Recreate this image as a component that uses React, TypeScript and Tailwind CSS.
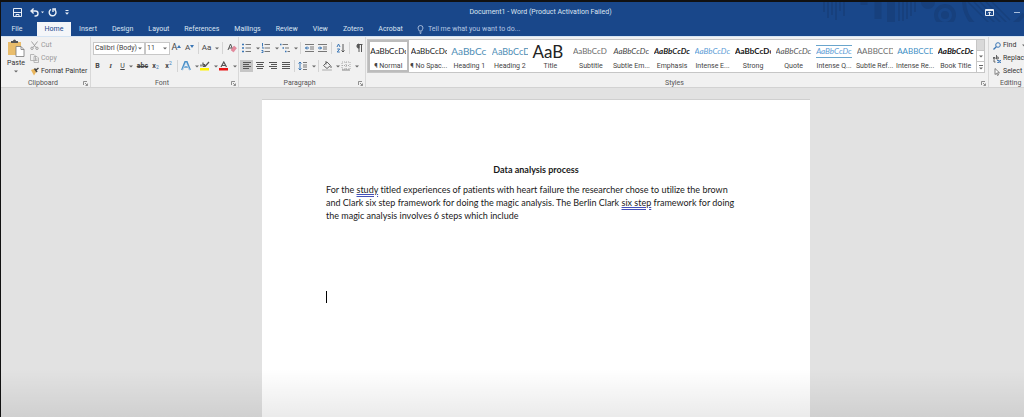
import type { ReactNode } from "react";

type Style = { label: string; sample?: string; look: string };

const tabs = ["Insert", "Design", "Layout", "References", "Mailings", "Review", "View", "Zotero", "Acrobat"];

const styles: Style[] = [
  { label: "¶ Normal", look: "text-[#222]" },
  { label: "¶ No Spac...", look: "text-[#222]" },
  { label: "Heading 1", sample: "AaBbCc", look: "text-[10px] text-[#4d8db5]" },
  { label: "Heading 2", sample: "AaBbCcD", look: "text-[9px] text-[#4d8db5]" },
  { label: "Title", sample: "AaB", look: "text-[17px] text-[#222]" },
  { label: "Subtitle", sample: "AaBbCcD", look: "text-[#6b6b6b]" },
  { label: "Subtle Em...", look: "italic text-[#444]" },
  { label: "Emphasis", look: "italic font-bold text-[#222]" },
  { label: "Intense E...", look: "italic text-[#5b9bd5]" },
  { label: "Strong", look: "font-bold text-[#111]" },
  { label: "Quote", look: "italic text-[#555]" },
  { label: "Intense Q...", look: "italic text-[#5b9bd5] border-y border-[#6aa5cc]" },
  { label: "Subtle Ref...", sample: "AABBCCDD", look: "text-[#6b6b6b]" },
  { label: "Intense Re...", sample: "AABBCCDD", look: "text-[#3f8fc4]" },
  { label: "Book Title", look: "italic font-bold text-[#111]" },
];

const Caret = () => (
  <svg viewBox="0 0 4 3" className="h-[3px] w-1 shrink-0">
    <path d="M0 .5h4L2 2.5z" fill="#666" />
  </svg>
);

const Sep = () => <span className="mx-[2px] h-3 w-px shrink-0 bg-[#d4d4d4]" />;

const Tool = ({ label, children, caret, active }: { label: string; children: ReactNode; caret?: boolean; active?: boolean }) => (
  <button
    type="button"
    aria-label={label}
    className={`flex h-3 shrink-0 items-center justify-center text-[#444] ${caret ? "w-[19px] gap-1" : "w-[13px]"} ${active ? "bg-[#c6c6c6]" : ""}`}
  >
    {children}
    {caret && <Caret />}
  </button>
);

const Icon = ({ children }: { children: ReactNode }) => (
  <svg viewBox="0 0 10 10" className="size-[10px] shrink-0" fill="none" stroke="#555" strokeWidth="1">
    {children}
  </svg>
);

const Launcher = () => (
  <svg viewBox="0 0 5 5" className="size-[5px]" fill="none" stroke="#777" strokeWidth=".8">
    <path d="M.5 4V.5H4M2 2l2.2 2.2M4.5 2.5v2h-2" />
  </svg>
);

const Group = ({ name, className, children }: { name: string; className: string; children: ReactNode }) => (
  <section aria-label={name} className={`flex flex-col border-r border-[#d8d8d8] ${className}`}>
    <div className="h-[42px]">{children}</div>
    <div className="flex h-2 items-center px-[2px] text-[7px] leading-[8px] text-[#555]">
      <span className="flex-1 text-center">{name}</span>
      <button type="button" aria-label={`${name} settings`}>
        <Launcher />
      </button>
    </div>
  </section>
);

const TitleArt = () => (
  <svg viewBox="0 0 210 32" className="absolute top-0 right-0 h-8 w-[210px]" fill="none" stroke="#17407d">
    <path strokeWidth="2" d="M10 0v10M14 0v16M18 0v13M22 0v18M26 0v9M30 0v14" />
    <path strokeWidth="7" d="M50 0v3M64 0v17" />
    <path strokeWidth="8" d="M77 0v21" />
    <path strokeWidth="2" d="M85 0v19M89 0v19M93 0v17M97 0v14M101 0v10" />
    <circle cx="114" cy="0" r="7" fill="#17407d" stroke="none" />
    <circle cx="131" cy="13" r="9" strokeWidth="4" />
    <circle cx="131" cy="13" r="4" fill="#17407d" stroke="none" />
    <path strokeWidth="4" d="M150 0c1 17 12 29 29 29 12 0 22-6 31-17" />
    <path strokeWidth="1.5" d="M154 0l25 25M160 0l24 24M166 0l23 23M172 0l21 21M178 0l18 18" />
  </svg>
);

const TitleBar = () => (
  <div className="relative flex h-5 items-center bg-[#19478a] text-white">
    <TitleArt />
    <div className="relative flex items-center gap-2 pl-3">
      <button type="button" aria-label="Save">
        <svg viewBox="0 0 9 9" className="size-[9px]" fill="none" stroke="#e8eef6">
          <path d="M.5.5h8v8h-8zM.5 4.5h8M3 8.5V6.5h3v2" />
        </svg>
      </button>
      <button type="button" aria-label="Undo" className="flex items-center gap-[2px]">
        <svg viewBox="0 0 9 9" className="size-[9px]" fill="none" stroke="#e8eef6" strokeWidth="1.4">
          <path d="M3.6.6L1 3l2.6 2.4M1.2 3H5.500a2.500 2.500 0 0 1 0 5H4.500" />
        </svg>
        <svg viewBox="0 0 4 3" className="h-[3px] w-[3px]">
          <path d="M0 0h4L2 2.500z" fill="#e8eef6" />
        </svg>
      </button>
      <button type="button" aria-label="Repeat" className="-ml-1">
        <svg viewBox="0 0 9 9" className="size-[9px]" fill="none" stroke="#e8eef6" strokeWidth="1.4">
          <path d="M3 1.400A3.400 3.400 0 1 0 6.500 1.600M5 4V1h3" />
        </svg>
      </button>
      <button type="button" aria-label="Customize toolbar">
        <svg viewBox="0 0 4 5" className="h-[5px] w-1">
          <path d="M.5 0h3v1h-3zM0 2.500h4L2 4.800z" fill="#e8eef6" />
        </svg>
      </button>
    </div>
    <h1 className="absolute inset-x-0 pl-14 text-center text-[7px] text-[#dbe5f2]">Document1 - Word (Product Activation Failed)</h1>
    <div className="relative ml-auto flex items-center gap-5 pr-1">
      <button type="button" aria-label="Ribbon display options">
        <svg viewBox="0 0 9 7" className="h-[7px] w-[9px]" fill="none" stroke="#e8eef6">
          <path d="M.5.5h8v6h-8zM.5 1.500h8M4.500 6V3M3 4.300l1.500-1.500L6 4.300" />
        </svg>
      </button>
      <button type="button" aria-label="Minimize" className="h-px w-[6px] bg-[#aabfdc]" />
    </div>
  </div>
);

const TabRow = () => (
  <nav className="relative flex h-[14px] items-stretch bg-[#19478a] text-[7px] text-[#dbe5f2]">
    <a href="#file" className="flex w-8 items-center justify-center">File</a>
    <a href="#home" className="ml-1 flex w-[34px] items-center justify-center bg-[#f4f6f9] text-[#19478a]">Home</a>
    <div className="flex gap-[15px] pl-2">
      {tabs.map((tab) => (
        <a key={tab} href={`#${tab.toLowerCase()}`} className="flex items-center">
          {tab}
        </a>
      ))}
    </div>
    <label className="ml-[14px] flex flex-1 items-center gap-1">
      <svg viewBox="0 0 7 9" className="h-[9px] w-[7px]" fill="none" stroke="#c3d2e8" strokeWidth=".8">
        <path d="M2.300 6C2.300 5 1 4.500 1 3a2.500 2.500 0 0 1 5 0c0 1.500-1.300 2-1.300 3zM2.500 7.200h2M2.800 8.400h1.400" />
      </svg>
      <input
        type="text"
        aria-label="Tell me"
        placeholder="Tell me what you want to do..."
        className="h-3 w-40 bg-transparent outline-none placeholder:text-[#b3c6e2]"
      />
    </label>
  </nav>
);

const Clipboard = () => (
  <Group name="Clipboard" className="w-[90px]">
    <div className="flex pt-[2px] pl-[5px]">
      <button type="button" className="flex w-[20px] flex-col items-center text-[7px] leading-[8px] text-[#333]">
        <svg viewBox="0 0 18 18" className="size-[18px]">
          <path d="M1 3h13v13H1z" fill="#e9bd6c" />
          <path d="M4 4V2h2a1.500 1.500 0 0 1 3 0h2v2z" fill="#555" />
          <path d="M9 7.500h5l3 3v7H9z" fill="#fff" stroke="#777" strokeWidth=".8" />
          <path d="M14 7.500v3h3" fill="none" stroke="#777" strokeWidth=".8" />
        </svg>
        <span className="mt-[2px]">Paste</span>
        <span className="mt-[3px]"><Caret /></span>
      </button>
      <div className="flex flex-col pl-1 text-[7px] leading-[13px] text-[#999]">
        <button type="button" className="flex items-center gap-[2px]">
          <svg viewBox="0 0 9 9" className="size-[9px]" fill="none" stroke="#999" strokeWidth=".9">
            <path d="M1.500.5l4.500 6M7.500.5L3 6.500" />
            <circle cx="2" cy="7.300" r="1.200" />
            <circle cx="7" cy="7.300" r="1.200" />
          </svg>
          Cut
        </button>
        <button type="button" className="flex items-center gap-[2px]">
          <svg viewBox="0 0 9 9" className="size-[9px]" fill="#f1f1f1" stroke="#aaa" strokeWidth=".8">
            <path d="M.5.5H4L5.500 2v4.500h-5zM4 2.500h3L8.500 4v4.500H4zM5 5h2.500M5 6.500h2.500" />
          </svg>
          Copy
        </button>
        <button type="button" className="flex items-center gap-[2px] whitespace-nowrap text-[#333]">
          <svg viewBox="0 0 9 9" className="size-[9px]">
            <path d="M1 3l4-1.500 1.500 3L4 8.500z" fill="#e9b55c" />
            <path d="M4.500 1.500L7 5M6 3l2.500-2" stroke="#444" strokeWidth="1.500" />
          </svg>
          Format Painter
        </button>
      </div>
    </div>
  </Group>
);

const Combo = ({ label, value, className }: { label: string; value: string; className: string }) => (
  <div className={`relative flex h-[13px] shrink-0 items-center border border-[#c8c8c8] bg-white ${className}`}>
    <select aria-label={label} className="h-[11px] w-full appearance-none bg-transparent pl-px text-[7px] leading-[11px] text-[#444] outline-none">
      <option>{value}</option>
    </select>
    <span className="pointer-events-none absolute right-[2px] flex"><Caret /></span>
  </div>
);

const FontGroup = () => (
  <Group name="Font" className="w-[148px]">
    <div className="flex h-[22px] items-center pl-[2px] text-[8px]">
      <Combo label="Font" value="Calibri (Body)" className="w-[52px]" />
      <Combo label="Font size" value="11" className="w-[25px]" />
      <Tool label="Grow font">
        <span className="text-[9px]">A</span>
        <svg viewBox="0 0 4 3" className="mb-1 h-[3px] w-1"><path d="M0 3h4L2 0z" fill="#3a76b5" /></svg>
      </Tool>
      <Tool label="Shrink font">
        A
        <svg viewBox="0 0 4 3" className="mb-1 h-[3px] w-1"><path d="M0 0h4L2 3z" fill="#3a76b5" /></svg>
      </Tool>
      <Sep />
      <Tool label="Change case" caret>Aa</Tool>
      <Sep />
      <Tool label="Clear formatting">
        <Icon>
          <path d="M1 7l2.500-6L6 7M2 5h3" />
          <path d="M4 7l3-4 2.500 2-3 4z" fill="#e58a9c" stroke="#d9738a" strokeWidth=".5" />
        </Icon>
      </Tool>
    </div>
    <div className="flex h-[14px] items-center text-[7px]">
      <Tool label="Bold"><b>B</b></Tool>
      <Tool label="Italic"><i className="font-['Liberation_Serif',serif] font-bold">I</i></Tool>
      <Tool label="Underline" caret><span className="underline">U</span></Tool>
      <Tool label="Strikethrough"><s className="font-bold">abc</s></Tool>
      <Tool label="Subscript"><b>x</b><span className="mt-1 text-[5px] text-[#3a76b5]">2</span></Tool>
      <Tool label="Superscript"><b>x</b><span className="mb-1 text-[5px] text-[#3a76b5]">2</span></Tool>
      <Sep />
      <Tool label="Text effects" caret>
        <Icon>
          <path d="M1 9L4.200 1h1.600L9 9M2.800 6h4.400" stroke="#4a90c8" strokeWidth="2" />
          <path d="M1.500 9L5 1.500 8.500 9M3 6h4" stroke="#eef5fb" strokeWidth=".6" />
        </Icon>
      </Tool>
      <Tool label="Highlight" caret>
        <Icon>
          <path d="M1 5.500V3.500M3 5.500v-4M3 3.500h1.500v2H3M5 5.500L9 1" strokeWidth="1.200" />
          <path d="M0 7h9v2.500H0z" fill="#fff200" stroke="none" />
        </Icon>
      </Tool>
      <Tool label="Font color" caret>
        <Icon>
          <path d="M2 6l2.800-5L7.500 6M3 4.500h3.500" strokeWidth="1.200" />
          <path d="M0 7h9v2.500H0z" fill="#e81414" stroke="none" />
        </Icon>
      </Tool>
    </div>
  </Group>
);

const ParagraphGroup = () => (
  <Group name="Paragraph" className="w-[127px]">
    <div className="flex h-[22px] items-center pl-[2px]">
      <Tool label="Bullets" caret>
        <Icon>
          <path d="M0 1.500h2M0 5h2M0 8.500h2" stroke="#3a76b5" strokeWidth="1.600" />
          <path d="M3.500 1.500H9M3.500 5H9M3.500 8.500H9" stroke="#777" />
        </Icon>
      </Tool>
      <Tool label="Numbering" caret>
        <Icon>
          <path d="M1.500 0v3M1 4h1v2M.5 7.500h1.500v2H.5" stroke="#3a76b5" />
          <path d="M3.500 1.500H9M3.500 5H9M3.500 8.500H9" stroke="#777" />
        </Icon>
      </Tool>
      <Tool label="Multilevel list" caret>
        <Icon>
          <path d="M0 1.500h1.500M2.500 5H4M5 8.500h1.500" stroke="#3a76b5" strokeWidth="1.600" />
          <path d="M2.500 1.500H8M5 5h4M7.500 8.500H10" stroke="#777" />
        </Icon>
      </Tool>
      <Sep />
      <Tool label="Decrease indent">
        <Icon>
          <path d="M0 1.500h9M5 4h4M5 6h4M0 8.500h9" stroke="#777" />
          <path d="M4 5H.5M2 3.500L.5 5 2 6.500" stroke="#2b6cb0" />
        </Icon>
      </Tool>
      <Tool label="Increase indent">
        <Icon>
          <path d="M0 1.500h9M5 4h4M5 6h4M0 8.500h9" stroke="#777" />
          <path d="M0 5h3.500M2 3.500L3.500 5 2 6.500" stroke="#2b6cb0" />
        </Icon>
      </Tool>
      <Sep />
      <Tool label="Sort">
        <Icon>
          <path d="M1 4l1.500-3L4 4M1.200 6h2.500L1.200 9h2.600" stroke="#3a76b5" />
          <path d="M7 1v8M5.500 7.500L7 9l1.500-1.500" />
        </Icon>
      </Tool>
      <Sep />
      <Tool label="Show marks">
        <Icon>
          <path d="M5 9V1.500M7.500 9V1.500M3.500 1.500H8.500" />
          <path d="M5 1a2 2 0 0 0 0 4.200z" fill="#555" />
        </Icon>
      </Tool>
    </div>
    <div className="flex h-[14px] items-center pl-px">
      <Tool label="Align left" active>
        <Icon><path d="M1 1.500h8M1 3.500h6M1 5.500h8M1 7.500h6" /></Icon>
      </Tool>
      <Tool label="Center">
        <Icon><path d="M1 1.500h8M2 3.500h6M1 5.500h8M2 7.500h6" /></Icon>
      </Tool>
      <Tool label="Align right">
        <Icon><path d="M1 1.500h8M3 3.500h6M1 5.500h8M3 7.500h6" /></Icon>
      </Tool>
      <Tool label="Justify">
        <Icon><path d="M1 1.500h8M1 3.500h8M1 5.500h8M1 7.500h8" /></Icon>
      </Tool>
      <Sep />
      <Tool label="Line spacing" caret>
        <Icon>
          <path d="M2 1v8M.5 2.500L2 1l1.500 1.500M.5 7.500L2 9l1.500-1.500" stroke="#3a76b5" />
          <path d="M5 1.500h4M5 4h4M5 6h4M5 8.500h4" stroke="#777" />
        </Icon>
      </Tool>
      <Sep />
      <Tool label="Shading" caret>
        <Icon>
          <path d="M1.500 4.500L5 1l3.500 3.500-3.500 3zM4 0v3.500M9 5v2" stroke="#666" />
          <path d="M.5 8.500h9v1h-9z" stroke="#aaa" strokeWidth=".5" />
        </Icon>
      </Tool>
      <Tool label="Borders" caret>
        <Icon>
          <path d="M1 1h8v7H1zM5 1v7M1 4.500h8" stroke="#aaa" strokeDasharray="1 1" />
          <path d="M1 9h8" stroke="#888" />
        </Icon>
      </Tool>
    </div>
  </Group>
);

const StylesGroup = () => (
  <Group name="Styles" className="min-w-0 flex-1">
    <div className="mt-[2px] ml-px mr-[3px] flex h-[34px] border border-[#c6c6c6] bg-white">
      <div className="grid min-w-0 flex-1 grid-cols-15">
        {styles.map(({ label, sample = "AaBbCcDc", look }, i) => (
          <button
            key={label}
            type="button"
            className={`flex min-w-0 flex-col items-center ${i === 0 ? "outline-2 -outline-offset-2 outline-[#bcbcbc]" : ""}`}
          >
            <span className="flex h-[21px] w-9 items-center overflow-hidden pt-[2px]">
              <span className={`font-[Lato,sans-serif] whitespace-nowrap text-[8px] leading-[11px] ${look}`}>{sample}</span>
            </span>
            <span className="text-[7px] leading-[10px] whitespace-nowrap text-[#444]">{label}</span>
          </button>
        ))}
      </div>
      <div className="flex w-2 flex-col divide-y divide-[#c6c6c6] border-l border-[#c6c6c6]">
        <button type="button" aria-label="Previous styles" className="flex flex-1 items-center justify-center bg-[#d9d9d9]" />
        <button type="button" aria-label="Next styles" className="flex flex-1 items-center justify-center"><Caret /></button>
        <button type="button" aria-label="More styles" className="flex flex-1 flex-col items-center justify-center gap-px">
          <span className="h-px w-1 bg-[#666]" />
          <Caret />
        </button>
      </div>
    </div>
  </Group>
);

const Editing = () => (
  <section aria-label="Editing" className="flex w-[35px] flex-col overflow-hidden text-[7px] text-[#333]">
    <div className="flex h-[42px] flex-col pt-[2px] pl-1 leading-[13px]">
      <button type="button" className="flex items-center gap-[2px]">
        <svg viewBox="0 0 8 8" className="size-2 shrink-0" fill="none" stroke="#3a76b5">
          <circle cx="5" cy="3" r="2.300" />
          <path d="M3.300 4.700L.5 7.500" strokeWidth="1.300" />
        </svg>
        Find
        <span className="ml-1"><Caret /></span>
      </button>
      <button type="button" className="flex items-center gap-[2px]">
        <svg viewBox="0 0 8 8" className="size-2 shrink-0" fill="none" stroke="#555" strokeWidth=".9">
          <path d="M0 2.500h2V4H.3V3M3.500 0v4h1.700V2H3.500M1 5v2h1.500" />
          <path d="M4 5.500h2v2H4.200M8 5.500H6.800v2H8" stroke="#3a76b5" />
        </svg>
        Replace
      </button>
      <button type="button" className="flex items-center gap-[2px]">
        <svg viewBox="0 0 8 8" className="size-2 shrink-0" fill="#fff" stroke="#666" strokeWidth=".8">
          <path d="M2 .5v6l1.500-1.300 1 2.300 1-.5-1-2.200h2z" />
        </svg>
        Select
        <Caret />
      </button>
    </div>
    <div className="pl-[11px] leading-[8px] text-[#555]">Editing</div>
  </section>
);

const Misspelled = ({ children }: { children: ReactNode }) => (
  <span className="underline decoration-[#4450b8] decoration-double decoration-1 underline-offset-1">{children}</span>
);

export default function App() {
  return (
    <div className="relative flex min-h-screen flex-col overflow-hidden border-t-2 border-l border-[#111] bg-[#e2e2e2] font-[Roboto,sans-serif]">
      <header>
        <TitleBar />
        <TabRow />
        <div className="flex h-[52px] border-t border-b border-t-[#d5e4f3] border-b-[#d2d2d2] bg-[#f1f1f1]">
          <Clipboard />
          <FontGroup />
          <ParagraphGroup />
          <StylesGroup />
          <Editing />
        </div>
      </header>
      <main className="flex flex-1 justify-center pt-[11px] pl-[47px]">
        <article className="w-[548px] border-t border-[#cfcfcf] bg-white px-16 pt-[63px] font-[Lato,sans-serif] text-[9px] leading-[13px] text-[#1a1a1a] [font-variant-ligatures:none]">
          <h2 className="text-center font-bold">Data analysis process</h2>
          <p className="mt-[7px] whitespace-nowrap">
            For the <Misspelled>study</Misspelled> titled experiences of patients with heart failure the researcher chose to utilize the brown
            <br />
            and Clark six step framework for doing the magic analysis. The Berlin Clark <Misspelled>six step</Misspelled> framework for doing
            <br />
            the magic analysis involves 6 steps which include
          </p>
          <div className="mt-[69px] h-3 w-px bg-black" />
        </article>
      </main>
      <div className="pointer-events-none absolute inset-x-0 bottom-0 h-12 bg-linear-to-b from-black/0 to-black/8" />
    </div>
  );
}
